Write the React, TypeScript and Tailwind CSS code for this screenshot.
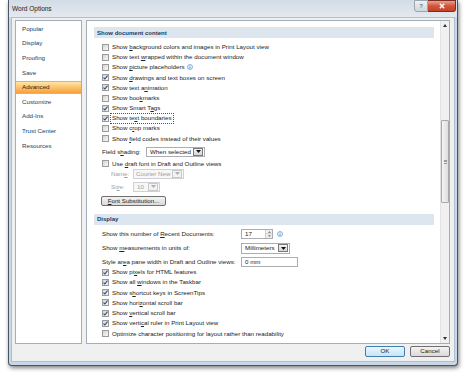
import React from 'react';

const K = ({ children }: { children: React.ReactNode }) => (
  <u className="underline decoration-[0.6px] underline-offset-[1px]">{children}</u>
);

const Check = ({ checked }: { checked?: boolean }) => (
  <span className="w-[7px] h-[7px] shrink-0 border border-[#9a9a9a] bg-gradient-to-br from-[#d4d4d4] to-[#f8f8f8] flex items-center justify-center">
    {checked && (
      <svg width="5" height="5" viewBox="0 0 5 5">
        <path d="M0.5 2.6 L1.9 4 L4.5 0.7" fill="none" stroke="#2b4d7e" strokeWidth="1.1" />
      </svg>
    )}
  </span>
);

const Row = ({
  checked,
  focus,
  h = 'h-[10.2px]',
  children,
}: {
  checked?: boolean;
  focus?: boolean;
  h?: string;
  children: React.ReactNode;
}) => (
  <div className={`${h} flex items-center pl-[15px] gap-[3px]`}>
    <Check checked={checked} />
    <span className={focus ? 'outline-1 outline-dotted outline-[#555] outline-offset-[1px]' : ''}>{children}</span>
  </div>
);

const Info = () => (
  <svg width="6" height="6" viewBox="0 0 6 6" className="shrink-0">
    <circle cx="3" cy="3" r="2.5" fill="#eef5fd" stroke="#5d93d6" strokeWidth="0.7" />
    <line x1="3" y1="2.6" x2="3" y2="4.6" stroke="#3b74c4" strokeWidth="0.8" />
    <circle cx="3" cy="1.6" r="0.45" fill="#3b74c4" />
  </svg>
);

const DropArrow = ({ disabled }: { disabled?: boolean }) => (
  <span
    className={`w-[10px] h-[8px] mr-[1px] shrink-0 border flex items-center justify-center ${
      disabled
        ? 'border-[#c9c9c9] bg-[#f2f2f2]'
        : 'border-[#7a7a7a] bg-gradient-to-b from-[#f4f4f4] to-[#d5d5d5]'
    }`}
  >
    <svg width="5" height="3" viewBox="0 0 5 3">
      <path d="M0 0h5L2.5 3z" fill={disabled ? '#b0b0b0' : '#111'} />
    </svg>
  </span>
);

const Section = ({ children, mt }: { children: React.ReactNode; mt: string }) => (
  <div className={`${mt} ml-[7px] mr-[6px] h-[11px] shrink-0 bg-[#dde6ef] flex items-center pl-[3px] font-bold text-[6px] text-[#1b3a60]`}>
    {children}
  </div>
);

const navItems = ['Popular', 'Display', 'Proofing', 'Save', 'Advanced', 'Customize', 'Add-Ins', 'Trust Center', 'Resources'];

export default function App() {
  return (
    <div className="w-[474px] h-[380px] bg-white overflow-hidden font-['Liberation_Sans',Arial,sans-serif] text-[6.2px] leading-none text-[#222]">
      <div className="ml-[8px] w-[450px] h-[366px] flex flex-col border-l border-r border-b border-[#4a5563] rounded-b-[4px] bg-[#c9d8e8] shadow-[1px_2px_4px_rgba(0,0,0,0.5)]">
        {/* title bar */}
        <div className="h-[17px] shrink-0 flex items-start justify-between bg-gradient-to-b from-[#d3dce6] to-[#e4e9ef]">
          <span className="pl-[3px] pt-[6px] text-[6.5px] text-[#1b1b1b]">Word Options</span>
          <div className="flex mr-[1px]">
            <span className="w-[14px] h-[12px] border border-[#9aa6b3] rounded-bl-[3px] bg-gradient-to-b from-[#eef1f4] to-[#cfd6de] flex items-center justify-center text-[6px] font-bold text-[#6b7785]">
              ?
            </span>
            <span className="w-[28px] h-[12px] border border-l-0 border-[#7a2e21] rounded-br-[3px] bg-gradient-to-b from-[#e9a08c] via-[#d0553b] to-[#c2432a] flex items-center justify-center">
              <svg width="6" height="6" viewBox="0 0 6 6">
                <path d="M0.8 0.8 L5.2 5.2 M5.2 0.8 L0.8 5.2" stroke="#fff" strokeWidth="1.4" />
              </svg>
            </span>
          </div>
        </div>

        {/* client */}
        <div className="mx-[2px] mb-[3px] flex-1 flex flex-col border border-[#aebfd2] bg-[#f0f0f0] pt-[2px] pl-[3px] pr-[4px] pb-[4px]">
          <div className="h-[324px] flex gap-[4px]">
            {/* nav */}
            <div className="w-[67px] shrink-0 border border-[#a3aebb] bg-white pt-[1.7px]">
              {navItems.map(item => (
                <div
                  key={item}
                  className={`h-[12.6px] mb-[2px] flex items-center pl-[6px] ${
                    item === 'Advanced'
                      ? 'bg-gradient-to-b from-[#fde6a6] via-[#fbc26a] to-[#f6a03b] border-y border-[#e7b15f] text-[#2b2417]'
                      : 'text-[#213d63]'
                  }`}
                >
                  {item}
                </div>
              ))}
            </div>

            {/* content */}
            <div className="flex-1 border border-[#a3aebb] bg-white flex overflow-hidden">
              <div className="flex-1 flex flex-col">
                <Section mt="mt-[6px]">Show document content</Section>
                <div className="mt-[4px]">
                  <Row>Show <K>b</K>ackground colors and images in Print Layout view</Row>
                  <Row>Show text <K>w</K>rapped within the document window</Row>
                  <div className="h-[10.2px] flex items-center pl-[15px] gap-[3px]">
                    <Check />
                    <span>Show <K>p</K>icture placeholders</span>
                    <span className="-ml-[1px]"><Info /></span>
                  </div>
                  <Row checked>Show <K>d</K>rawings and text boxes on screen</Row>
                  <Row checked>Show text a<K>n</K>imation</Row>
                  <Row>Show boo<K>k</K>marks</Row>
                  <Row checked>Show Smart T<K>a</K>gs</Row>
                  <Row checked focus>Show te<K>x</K>t boundaries</Row>
                  <Row>Show c<K>r</K>op marks</Row>
                  <Row>Show <K>f</K>ield codes instead of their values</Row>
                </div>

                <div className="mt-[3px] h-[10px] flex items-center pl-[15px]">
                  <span className="w-[44px]">Field s<K>h</K>ading:</span>
                  <span className="w-[59px] h-[10px] border border-[#abadb3] bg-white flex items-center justify-between pl-[3px]">
                    When selected
                    <DropArrow />
                  </span>
                </div>
                <Row h="h-[10px] mt-[2px]">Use <K>d</K>raft font in Draft and Outline views</Row>
                <div className="h-[10px] flex items-center pl-[24px] text-[#a0a0a0]">
                  <span className="w-[22px]">Nam<K>e</K>:</span>
                  <span className="w-[51px] h-[10px] border border-[#cfd1d6] bg-[#f7f7f7] flex items-center justify-between pl-[2px]">
                    Courier New
                    <DropArrow disabled />
                  </span>
                </div>
                <div className="mt-[3px] h-[10px] flex items-center pl-[24px] text-[#a0a0a0]">
                  <span className="w-[22px]">Si<K>z</K>e:</span>
                  <span className="w-[27px] h-[10px] border border-[#cfd1d6] bg-[#f7f7f7] flex items-center justify-between pl-[3px]">
                    10
                    <DropArrow disabled />
                  </span>
                </div>
                <div className="mt-[4px] pl-[14px]">
                  <span className="w-[65px] h-[10px] border border-[#707070] rounded-[2px] bg-gradient-to-b from-[#f3f3f3] to-[#dadada] flex items-center justify-center">
                    <K>F</K>ont Substitution...
                  </span>
                </div>

                <Section mt="mt-[8px]">Display</Section>
                <div className="mt-[4px] h-[10px] flex items-center pl-[15px]">
                  <span className="w-[139px]">Show this number of <K>R</K>ecent Documents:</span>
                  <span className="w-[32px] h-[10px] border border-[#abadb3] bg-white flex items-center justify-between pl-[3px]">
                    17
                    <span className="w-[7px] h-[8px] flex flex-col border-l border-[#d0d0d0]">
                      <span className="flex-1 flex items-center justify-center bg-[#f1f1f1] border-b border-[#d6d6d6]">
                        <svg width="3" height="2" viewBox="0 0 3 2"><path d="M0 2h3L1.5 0z" fill="#8a8a8a" /></svg>
                      </span>
                      <span className="flex-1 flex items-center justify-center bg-[#ebebeb]">
                        <svg width="3" height="2" viewBox="0 0 3 2"><path d="M0 0h3L1.5 2z" fill="#8a8a8a" /></svg>
                      </span>
                    </span>
                  </span>
                  <span className="ml-[4px]"><Info /></span>
                </div>
                <div className="mt-[4px] h-[11px] flex items-center pl-[15px]">
                  <span className="w-[139px]">Show <K>m</K>easurements in units of:</span>
                  <span className="w-[49px] h-[11px] border border-[#abadb3] bg-white flex items-center justify-between pl-[3px]">
                    Millimeters
                    <DropArrow />
                  </span>
                </div>
                <div className="mt-[3px] h-[10px] flex items-center pl-[15px]">
                  <span className="w-[139px]">Style ar<K>e</K>a pane width in Draft and Outline views:</span>
                  <span className="w-[57px] h-[10px] border border-[#abadb3] bg-white flex items-center pl-[3px]">
                    0 mm
                  </span>
                </div>
                <Row checked h="h-[10.3px]">Show pi<K>x</K>els for HTML features</Row>
                <Row checked h="h-[10.3px]">Show all <K>w</K>indows in the Taskbar</Row>
                <Row checked h="h-[10.3px]">Show s<K>h</K>ortcut keys in ScreenTips</Row>
                <Row checked h="h-[10.3px]">Show hori<K>z</K>ontal scroll bar</Row>
                <Row checked h="h-[10.3px]">Show <K>v</K>ertical scroll bar</Row>
                <Row checked h="h-[10.3px]">Show verti<K>c</K>al ruler in Print Layout view</Row>
                <Row h="h-[10.3px]">Optimize character positioning for layout rather than readability</Row>
              </div>

              {/* scrollbar */}
              <div className="w-[9px] shrink-0 bg-[#f0f0f0] border-l border-[#e2e2e2] flex flex-col items-center">
                <div className="h-[9px] flex items-center justify-center">
                  <svg width="4" height="3" viewBox="0 0 4 3"><path d="M0 3h4L2 0z" fill="#333" /></svg>
                </div>
                <div className="flex-1 w-full flex flex-col items-center">
                  <div className="mt-[90px] w-[8px] h-[83px] border border-[#a9a9a9] rounded-[1px] bg-gradient-to-r from-[#f4f4f4] to-[#dedede] flex items-center justify-center">
                    <div className="w-[3px] h-[4px] border-y border-[#9a9a9a] flex items-center">
                      <div className="w-full h-px bg-[#9a9a9a]" />
                    </div>
                  </div>
                </div>
                <div className="h-[9px] flex items-center justify-center">
                  <svg width="4" height="3" viewBox="0 0 4 3"><path d="M0 0h4L2 3z" fill="#333" /></svg>
                </div>
              </div>
            </div>
          </div>

          {/* footer */}
          <div className="mt-[2px] flex justify-end gap-[5px]">
            <span className="w-[40px] h-[11px] border border-[#3c7fb1] rounded-[2px] bg-gradient-to-b from-[#eaf6fd] to-[#c8e4f5] flex items-center justify-center text-[#222]">
              OK
            </span>
            <span className="w-[40px] h-[11px] border border-[#707070] rounded-[2px] bg-gradient-to-b from-[#f3f3f3] to-[#dadada] flex items-center justify-center text-[#222]">
              Cancel
            </span>
          </div>
        </div>
      </div>
    </div>
  );
}
